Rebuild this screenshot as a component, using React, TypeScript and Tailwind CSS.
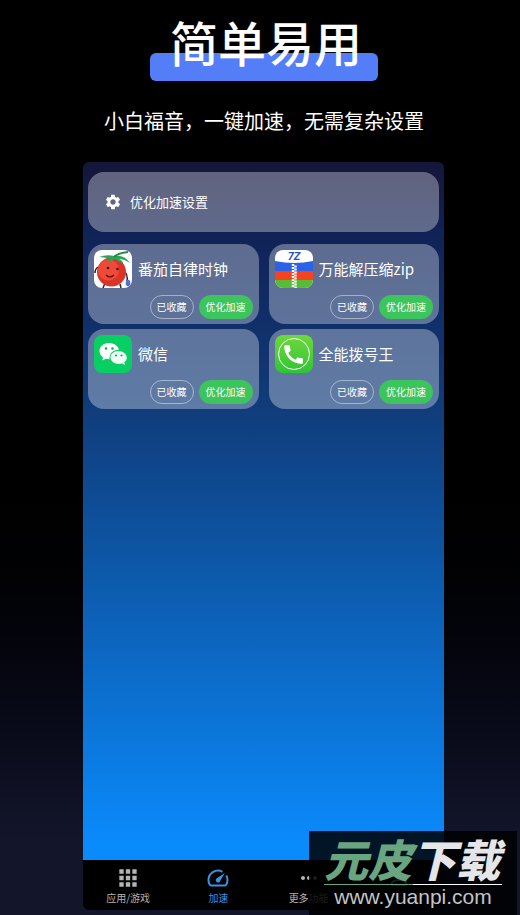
import type { ReactNode } from "react";
import { MdApps, MdCall, MdMoreHoriz, MdPersonOutline, MdSettings } from "react-icons/md";

interface AppEntry {
    name: string;
    icon: ReactNode;
}

interface NavEntry {
    id: string;
    label?: string;
    icon: ReactNode;
    active?: boolean;
}

function TomatoIcon() {
    return (
        <svg viewBox="0 0 38 38" className="size-full bg-white">
            <path d="M4 17 Q1 19 1 23 M31 22 Q34 25 33 31 M11 33 L9 38 M26 34 L27 38" stroke="#2b2230" strokeWidth="1.500" fill="none" />
            <ellipse cx="17.500" cy="22" rx="14.500" ry="14.500" fill="#dc3328" />
            <ellipse cx="14.500" cy="20" rx="10.500" ry="10.500" fill="#ee4a38" />
            <path d="M5 7 Q13 4 20 6 Q30 4 36 13 Q30 9 25 9 Q29 11 29 13 Q24 12 21 9 Q17 12 12 12 Q15 10 16 9 Q10 7 5 7Z" fill="#2ba558" />
            <path d="M20 7 Q24 3 34 2" stroke="#228b49" strokeWidth="2" fill="none" />
            <circle cx="14" cy="18" r="1.300" fill="#3a1111" />
            <circle cx="23.500" cy="19" r="1.300" fill="#3a1111" />
            <path d="M12 25 Q16 29 20 25" stroke="#5c1410" strokeWidth="1.200" fill="none" />
            <ellipse cx="34" cy="33" rx="2.300" ry="3.300" fill="#4f6fe0" />
        </svg>
    );
}

function ZipIcon() {
    return (
        <svg viewBox="0 0 38 38" className="size-full">
            <rect width="38" height="38" fill="#fff" />
            <path d="M0 11 Q19 15 38 11 V22 H0Z" fill="#2a62e8" />
            <rect y="21" width="38" height="9" fill="#f5431f" />
            <rect y="30" width="38" height="8" fill="#57bd34" />
            <path d="M18 14 V38" stroke="#fff" strokeWidth="2.500" strokeDasharray="2 1" />
            <path d="M20.500 15.500 V38" stroke="#fff" strokeWidth="2.500" strokeDasharray="2 1" />
            <text x="19" y="10" textAnchor="middle" fontSize="11" fontWeight="700" fontStyle="italic" fontFamily="Roboto, sans-serif" fill="#2450c8">
                7Z
            </text>
        </svg>
    );
}

function ChatIcon() {
    return (
        <svg viewBox="0 0 38 38" className="size-full">
            <rect width="38" height="38" fill="#08cf64" />
            <path d="M15 8 C9 8 5.500 12 5.500 16 C5.500 18.500 7 21 9 22.500 L8.300 25.500 L12 23.800 L15.500 24.200 C15 18 20 14.500 25 14.800 C24 10.500 19.500 8 15 8Z" fill="#fff" />
            <path d="M24.500 16 C19.500 16 16.500 19 16.500 22.500 C16.500 26 20 29 24.500 29 L28 28.400 L31 30 L30.300 27.300 C32 26 32.800 24.500 32.800 22.500 C32.800 19 29 16 24.500 16Z" fill="#f1fbf5" />
            <circle cx="12" cy="13.500" r="1.300" fill="#08b35a" />
            <circle cx="18.500" cy="13.500" r="1.300" fill="#08b35a" />
            <circle cx="22" cy="20.500" r="1.100" fill="#08b35a" />
            <circle cx="27.500" cy="20.500" r="1.100" fill="#08b35a" />
        </svg>
    );
}

function DialIcon() {
    return (
        <span className="relative flex size-full items-center justify-center bg-linear-to-b from-[#6bd93a] to-[#2cc436]">
            <span className="absolute size-8 rounded-full border border-white" />
            <MdCall size={25} className="text-white" />
        </span>
    );
}

function GaugeIcon() {
    return (
        <svg viewBox="0 0 22 18" className="h-[18px] w-[22px]" fill="none" stroke="currentColor" strokeWidth="2">
            <path d="M15.500 2.800 A9.500 9.500 0 0 0 1.500 11 Q1.500 13.500 2.700 15.500 Q3.300 16.600 4.500 16.600 H17.500 Q18.700 16.600 19.300 15.500 Q20.500 13.500 20.500 11 Q20.500 8.500 19.300 6.500" />
            <path d="M17.800 4 L13.200 12 A2.300 2.300 0 1 1 9.800 9.300Z" fill="currentColor" stroke="none" />
        </svg>
    );
}

const APPS: AppEntry[] = [
    { name: "番茄自律时钟", icon: <TomatoIcon /> },
    { name: "万能解压缩zip", icon: <ZipIcon /> },
    { name: "微信", icon: <ChatIcon /> },
    { name: "全能拨号王", icon: <DialIcon /> },
];

const NAV: NavEntry[] = [
    { id: "apps", label: "应用/游戏", icon: <MdApps size={26} /> },
    { id: "boost", label: "加速", icon: <GaugeIcon />, active: true },
    { id: "more", label: "更多功能", icon: <MdMoreHoriz size={24} /> },
    { id: "profile", icon: <MdPersonOutline size={24} /> },
];

function AppCard({ name, icon }: AppEntry) {
    return (
        <article className="flex h-20 flex-col justify-between rounded-2xl bg-white/33 px-1.5 pt-1.5 pb-[5px]">
            <div className="flex items-center gap-1.5">
                <div className="size-[38px] shrink-0 overflow-hidden rounded-lg">{icon}</div>
                <h2 className="text-[15px] leading-5 whitespace-nowrap">{name}</h2>
            </div>
            <div className="flex justify-end gap-[5px] text-[10px] leading-none">
                <button className="h-6 w-11 rounded-full border border-white/45">已收藏</button>
                <button className="h-6 w-[54px] rounded-full bg-[#3cc45d]">优化加速</button>
            </div>
        </article>
    );
}

export default function App() {
    return (
        <div className="relative flex min-h-screen flex-col bg-linear-to-b from-black from-45% to-[#13162b] to-92% pb-[5px] font-['Noto_Sans_CJK_SC',sans-serif] text-white">
            <header className="flex flex-col items-center pl-2 text-center">
                <div className="relative mt-3 pr-4 pl-5">
                    <div className="absolute inset-x-0 top-[41px] h-7 rounded-md bg-[#547ef8]" />
                    <h1 className="relative text-5xl leading-[58px] font-medium">简单易用</h1>
                </div>
                <p className="mt-[37px] text-xl leading-7">小白福音，一键加速，无需复杂设置</p>
            </header>

            <main className="mt-[27px] mr-[76px] ml-[83px] flex flex-1 flex-col overflow-hidden rounded-md bg-black">
                <div className="flex-1 bg-[linear-gradient(to_bottom,#14163a,#10245a_12%,#103d7c_36%,#0d54a2_55%,#0a8bfc_98%)] px-[5px] pt-2.5">
                    <button className="flex h-15 w-full items-center gap-2 rounded-2xl bg-white/33 px-4 text-[13px]">
                        <MdSettings size={18} />
                        优化加速设置
                    </button>
                    <div className="mt-3 grid grid-cols-2 gap-x-2.5 gap-y-[5px]">
                        {APPS.map(app => <AppCard key={app.name} {...app} />)}
                    </div>
                </div>
                <nav className="grid h-[50px] grid-cols-4">
                    {NAV.map(item => (
                        <a
                            key={item.id}
                            href="#"
                            aria-label={item.label ?? item.id}
                            className={`flex flex-col items-center pt-1.5 text-[10px] leading-4 ${item.active ? "text-[#3b91e4]" : "text-[#b4b4b4]"}`}
                        >
                            <span className="flex h-6 items-center">{item.icon}</span>
                            {item.label}
                        </a>
                    ))}
                </nav>
            </main>

            <aside className="absolute right-[3px] bottom-0 flex h-[84px] w-52 flex-col bg-black/85 px-[15px] pt-[5px]">
                <p className="h-12 text-[44px] leading-[44px] font-black whitespace-nowrap text-[#e4e6ea] italic">
                    <span className="text-[#69a580]">元皮</span>下载
                </p>
                <div className="flex h-px shrink-0">
                    <span className="flex-1 bg-[#69a580]" />
                    <span className="flex-1 bg-white" />
                </div>
                <p className="text-center font-['Liberation_Sans',sans-serif] text-[21px] leading-[24px] text-[#c4c4c4]">www.yuanpi.com</p>
            </aside>
        </div>
    );
}
